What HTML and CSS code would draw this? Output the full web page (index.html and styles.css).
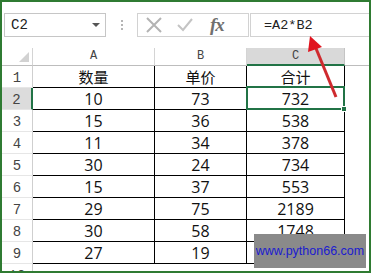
FILE: index.html
```html
<!DOCTYPE html>
<html lang="zh">
<head>
    <meta charset="UTF-8">
    <title>Excel formula</title>
    <link rel="stylesheet" href="styles.css">
</head>
<body>
    <div class="sheet">
        <div class="formula-bar">
            <div class="name-box">
                <span>C2</span>
                <span class="caret"></span>
            </div>
            <div class="grip"><i></i><i></i><i></i></div>
            <div class="fx-group">
                <svg class="icon" width="20" height="16" viewBox="0 0 20 16">
                    <path d="M3 1 L17 15 M17 1 L3 15" stroke="#b3b3b3" stroke-width="2" fill="none"/>
                </svg>
                <svg class="icon" width="18" height="16" viewBox="0 0 18 16">
                    <path d="M2 8 L7 13 L16 2" stroke="#c4c4c4" stroke-width="2" fill="none"/>
                </svg>
                <span class="fx">fx</span>
            </div>
            <div class="formula">=A2*B2</div>
        </div>

        <div class="grid">
            <div class="corner"><span class="tri"></span></div>
            <div class="col-head">A</div>
            <div class="col-head">B</div>
            <div class="col-head current">C</div>
            <div class="col-head last"></div>

            <div class="row-head">1</div>
            <div class="cell cjk">数量</div>
            <div class="cell cjk">单价</div>
            <div class="cell cjk">合计</div>
            <div class="empty"></div>

            <div class="row-head current">2</div>
            <div class="cell">10</div>
            <div class="cell">73</div>
            <div class="cell active">732<span class="handle"></span></div>
            <div class="empty"></div>

            <div class="row-head">3</div>
            <div class="cell">15</div>
            <div class="cell">36</div>
            <div class="cell">538</div>
            <div class="empty"></div>

            <div class="row-head">4</div>
            <div class="cell">11</div>
            <div class="cell">34</div>
            <div class="cell">378</div>
            <div class="empty"></div>

            <div class="row-head">5</div>
            <div class="cell">30</div>
            <div class="cell">24</div>
            <div class="cell">734</div>
            <div class="empty"></div>

            <div class="row-head">6</div>
            <div class="cell">15</div>
            <div class="cell">37</div>
            <div class="cell">553</div>
            <div class="empty"></div>

            <div class="row-head">7</div>
            <div class="cell">29</div>
            <div class="cell">75</div>
            <div class="cell">2189</div>
            <div class="empty"></div>

            <div class="row-head">8</div>
            <div class="cell">30</div>
            <div class="cell">58</div>
            <div class="cell">1748</div>
            <div class="empty"></div>

            <div class="row-head">9</div>
            <div class="cell">27</div>
            <div class="cell">19</div>
            <div class="cell">513</div>
            <div class="empty"></div>

            <div class="row-head">10</div>
            <div class="empty"></div>
            <div class="empty"></div>
            <div class="empty"></div>
            <div class="empty"></div>
        </div>

        <svg class="arrow" width="40" height="70" viewBox="300 32 40 70">
            <line x1="336" y1="97" x2="315" y2="46" stroke="#cf2a2e" stroke-width="3"/>
            <polygon points="310,36 322,47 308,52" fill="#e0141e"/>
        </svg>

        <div class="watermark">www.python66.com</div>
    </div>
</body>
</html>
```

FILE: styles.css
```css
* {
    box-sizing: border-box;
}
body {
    margin: 0;
    background-color: #fff;
}
.sheet {
    position: relative;
    width: 371px;
    height: 273px;
    border: 2px solid #2f7b32;
    overflow: hidden;
    background-color: #fff;
    font-family: "Liberation Mono", monospace;
}

/* formula bar */
.formula-bar {
    display: flex;
    align-items: stretch;
    height: 24px;
    margin-top: 11px;
    padding-left: 2px;
}
.name-box {
    width: 102px;
    border: 1px solid #c6c6c6;
    display: flex;
    align-items: center;
    justify-content: space-between;
    padding: 0 5px 0 6px;
    font-size: 14px;
    color: #222;
}
.caret {
    width: 0;
    height: 0;
    border-left: 4px solid transparent;
    border-right: 4px solid transparent;
    border-top: 4px solid #555;
}
.grip {
    width: 31px;
    display: flex;
    flex-direction: column;
    align-items: center;
    justify-content: center;
    gap: 2px;
}
.grip i {
    display: block;
    width: 2px;
    height: 2px;
    background-color: #b5b5b5;
}
.fx-group {
    width: 112px;
    border: 1px solid #d2d2d2;
    display: flex;
    align-items: center;
    padding-left: 6px;
}
.fx-group .icon {
    margin-right: 12px;
}
.fx-group .icon + .icon {
    margin-right: 16px;
}
.fx {
    font-family: "Liberation Serif", serif;
    font-style: italic;
    font-weight: bold;
    font-size: 19px;
    color: #707070;
    letter-spacing: -1px;
}
.formula {
    flex: 1;
    margin-left: 1px;
    border: 1px solid #d2d2d2;
    border-right: none;
    display: flex;
    align-items: center;
    padding-left: 13px;
    font-size: 13.5px;
    color: #222;
}

/* grid */
.grid {
    display: grid;
    grid-template-columns: 31px 122px 92px 98px 1fr;
    grid-template-rows: 18px repeat(10, 22px);
    margin-top: 11px;
}
.corner {
    border-right: 1px solid #d4d4d4;
    border-bottom: 1px solid #bdbdbd;
    display: flex;
    align-items: flex-end;
    justify-content: flex-end;
    padding: 0 3px 3px 0;
}
.tri {
    width: 10px;
    height: 10px;
    background-color: #d2d2d2;
    clip-path: polygon(100% 0, 100% 100%, 0 100%);
}
.col-head {
    border-right: 1px solid #d4d4d4;
    border-bottom: 1px solid #bdbdbd;
    text-align: center;
    font-size: 12px;
    line-height: 17px;
    color: #444;
}
.col-head.current {
    background-color: #d9d9d9;
    border-bottom: 2px solid #217346;
    border-right-color: #c4c4c4;
}
.col-head.last {
    border-right: none;
}
.row-head {
    border-right: 1px solid #cfcfcf;
    border-bottom: 1px solid #e6e6e6;
    display: flex;
    align-items: flex-end;
    justify-content: center;
    padding-bottom: 1px;
    font-size: 14px;
    line-height: 16px;
    color: #444;
}
.row-head.current {
    background-color: #dcdcdc;
    border-right: 2px solid #217346;
}
.cell {
    position: relative;
    border-right: 1px solid #000;
    border-bottom: 1px solid #000;
    display: flex;
    align-items: center;
    justify-content: center;
    font-family: "Open Sans", "Liberation Sans", sans-serif;
    font-size: 16px;
    line-height: 20px;
    color: #111;
}
.cell.cjk {
    font-family: "Noto Sans CJK SC", sans-serif;
    font-size: 15px;
}
.cell.active::after {
    content: "";
    position: absolute;
    top: -2px;
    left: -1px;
    right: -1px;
    bottom: -1px;
    border: 2px solid #217346;
}
.handle {
    position: absolute;
    right: -3px;
    bottom: -3px;
    width: 6px;
    height: 6px;
    background-color: #217346;
    border: 1px solid #fff;
    z-index: 1;
}

/* overlays */
.arrow {
    position: absolute;
    left: 298px;
    top: 30px;
}
.watermark {
    position: absolute;
    left: 252px;
    top: 232px;
    width: 112px;
    height: 34px;
    background-color: #8a8a8a;
    display: flex;
    align-items: center;
    justify-content: center;
    font-family: "Liberation Sans", sans-serif;
    font-size: 12.5px;
    color: #1b1bd0;
}
```
